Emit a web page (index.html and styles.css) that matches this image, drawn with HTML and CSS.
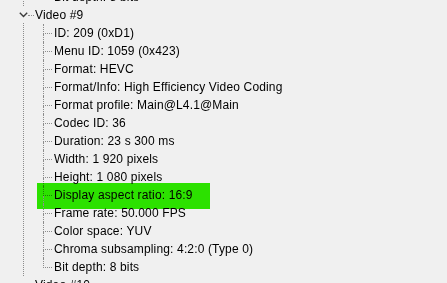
FILE: index.html
```html
<!DOCTYPE html>
<html>
<head>
<meta charset="UTF-8">
<title>Media Info Tree</title>
<link rel="stylesheet" href="styles.css">
</head>
<body>

<div class="tree">
  <ul class="root">
    <li class="node">
      <ul class="children">
        <li class="last">Bit depth: 8 bits</li>
      </ul>
    </li>
    <li class="node open">
      <span class="toggle"><svg width="9" height="6" viewBox="0 0 9 6"><path d="M0.8 0.8 L4.5 4.5 L8.2 0.8" fill="none" stroke="#3a3a3a" stroke-width="1.4"/></svg></span>
      <div class="label">Video #9</div>
      <ul class="children">
        <li>ID: 209 (0xD1)</li>
        <li>Menu ID: 1059 (0x423)</li>
        <li>Format: HEVC</li>
        <li>Format/Info: High Efficiency Video Coding</li>
        <li>Format profile: Main@L4.1@Main</li>
        <li>Codec ID: 36</li>
        <li>Duration: 23 s 300 ms</li>
        <li>Width: 1 920 pixels</li>
        <li>Height: 1 080 pixels</li>
        <li>Display aspect ratio: 16:9<span class="mark"></span></li>
        <li>Frame rate: 50.000 FPS</li>
        <li>Color space: YUV</li>
        <li>Chroma subsampling: 4:2:0 (Type 0)</li>
        <li class="last">Bit depth: 8 bits</li>
      </ul>
    </li>
    <li class="node">
      <span class="toggle"></span>
      <div class="label">Video #10</div>
    </li>
  </ul>
</div>

</body>
</html>
```

FILE: styles.css
```css
html, body {
  margin: 0;
  height: 100%;
  overflow: hidden;
  background: #f0f0f0;
}

.tree {
  margin-top: -12px;
  font-family: "Liberation Sans", Arial, sans-serif;
  font-size: 12px;
  letter-spacing: 0.15px;
  color: #000;
}

ul {
  list-style: none;
  margin: 0;
  padding: 0;
}

.root {
  margin-left: 23px;
  border-left: 1px dotted #8c8c8c;
}

.node {
  position: relative;
}

.label {
  height: 18px;
  line-height: 18px;
  padding-left: 11px;
  position: relative;
}

/* connector between the expander and the label */
.label::before {
  content: "";
  position: absolute;
  left: 4px;
  top: 0;
  width: 6px;
  height: 9px;
  border-bottom: 1px dotted #8c8c8c;
}

.toggle {
  position: absolute;
  left: -7px;
  top: 1px;
  width: 12px;
  height: 16px;
  background: #f0f0f0;
  display: flex;
  align-items: center;
  justify-content: center;
}

.children {
  margin-left: 19px;
}

.children li {
  position: relative;
  height: 18px;
  line-height: 18px;
  padding-left: 11px;
  white-space: nowrap;
}

.children li::before {
  content: "";
  position: absolute;
  left: 0;
  top: 0;
  width: 8px;
  height: 9px;
  border-left: 1px dotted #8c8c8c;
  border-bottom: 1px dotted #8c8c8c;
}

.children li::after {
  content: "";
  position: absolute;
  left: 0;
  top: 10px;
  bottom: 0;
  border-left: 1px dotted #8c8c8c;
}

.children li.last::after {
  display: none;
}

/* green highlighter stroke */
.mark {
  position: absolute;
  left: -6px;
  top: -3px;
  width: 173px;
  height: 26px;
  background: #2eef00;
  mix-blend-mode: multiply;
}
```
